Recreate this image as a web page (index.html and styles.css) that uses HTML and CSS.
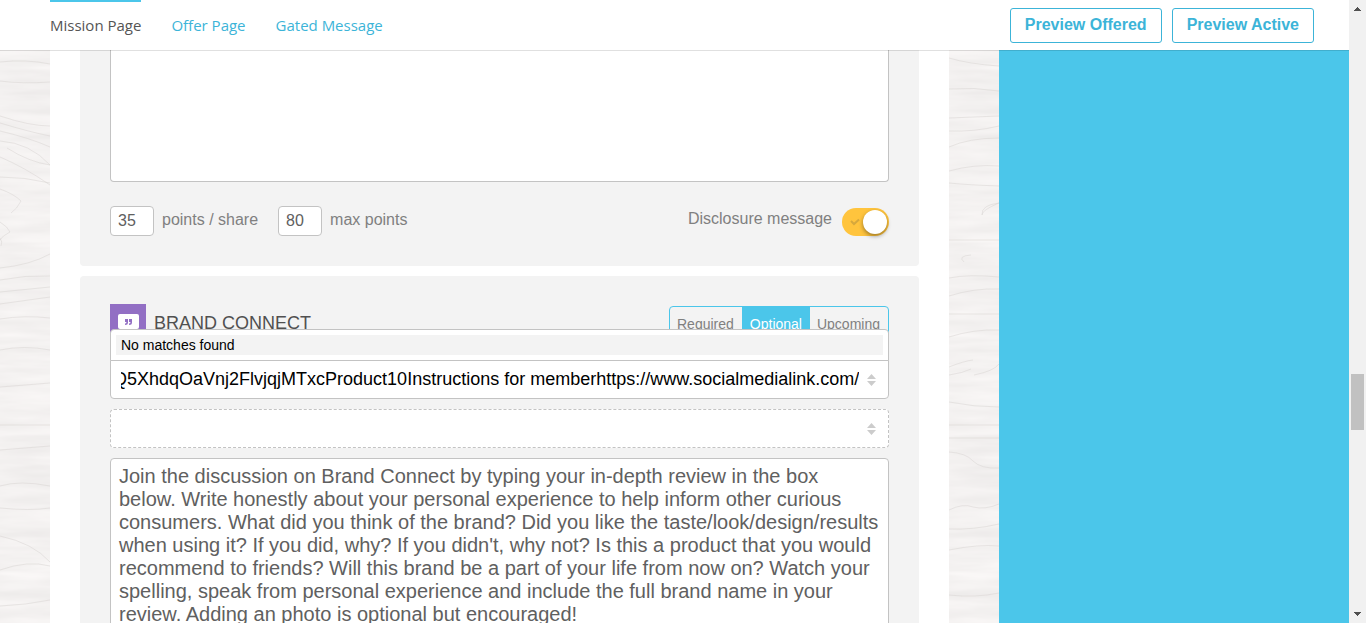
FILE: index.html
```
<!DOCTYPE html>
<html lang="en">
<head>
<meta charset="utf-8">
<title>Mission Page</title>
<link rel="stylesheet" href="styles.css">
</head>
<body>
<div class="app">
  <div class="main">
    <header class="topbar">
      <nav class="tabs">
        <a class="tab tab-active" href="#mission">Mission Page</a>
        <a class="tab" href="#offer">Offer Page</a>
        <a class="tab" href="#gated">Gated Message</a>
      </nav>
      <div class="actions">
        <button class="preview" type="button">Preview Offered</button>
        <button class="preview" type="button">Preview Active</button>
      </div>
    </header>
    <div class="workspace">
      <svg class="wood" viewBox="0 0 50 573" preserveAspectRatio="xMinYMin slice" aria-hidden="true">
        <defs>
          <filter id="grain" x="0" y="0" width="100%" height="100%" color-interpolation-filters="sRGB">
            <feTurbulence type="fractalNoise" baseFrequency="0.012 0.1" numOctaves="3" seed="4"/>
            <feColorMatrix values="0.07 0 0 0 0.92  0.07 0 0 0 0.911  0.07 0 0 0 0.908  0 0 0 0 1"/>
          </filter>
        </defs>
        <rect width="50" height="573" filter="url(#grain)"/>
        <g class="veins">
          <path d="M0 12q26-3 50 2M0 31q22 3 50 1M0 66q30 10 50 10M0 73q30 9 50 13M0 81q30 7 50 16M0 91q30 2 50 24M7 98q22 14 43 17M0 107q24 10 50 28M0 127q25 0 50 6"/>
          <path d="M0 139q14 5 21 12q-4 8-10 12M0 172q8 5 10 10q-8 4-10 8M0 188q3 4 1 8M0 218q30-3 50-14M0 230q25-5 50-4M0 242l50-5M0 254l50-7"/>
          <path d="M0 269q25-4 50-1M0 300q24-5 50 0M0 337l50-4M0 375h50M0 400l50-4M0 436q20-6 50 0M0 458q30 3 50 0M0 486q33 7 50 26M0 520q28-10 50-4M0 556q26-1 50-6"/>
        </g>
      </svg>
      <main class="page">
        <section class="card card-share">
          <textarea class="message message-share" aria-label="Share message"></textarea>
          <div class="points">
            <input class="number" id="share" type="text" value="35">
            <label class="points-label" for="share">points / share</label>
            <input class="number" id="max" type="text" value="80">
            <label class="points-label" for="max">max points</label>
            <label class="disclosure">
              <span class="disclosure-text">Disclosure message</span>
              <input class="switch-input" type="checkbox" checked>
              <span class="switch">
                <svg class="tick" viewBox="0 0 10 8" aria-hidden="true"><path d="M1 3L4 6L9 1.500"/></svg>
                <span class="knob"></span>
              </span>
            </label>
          </div>
        </section>
        <section class="card card-brand">
          <div class="brand-head">
            <svg class="brand-icon" viewBox="0 0 36 36" aria-hidden="true">
              <path fill="#926fc4" d="M0 0h36v36H0z"/>
              <path fill="#fff" d="M10 10h17q2 0 2 2v11q0 2-2 2H10q-2 0-2-2V12q0-2 2-2z"/>
              <path fill="#926fc4" d="M15 15h3v3.500q0 2.500-3 2.500v-1.500q1.500 0 1.500-1.500H15zM19 15h3v3.500q0 2.500-3 2.500v-1.500q1.500 0 1.500-1.500H19z"/>
            </svg>
            <h2 class="brand-title">BRAND CONNECT</h2>
            <div class="segments" role="radiogroup" aria-label="Status">
              <label class="segment"><input class="segment-input" type="radio" name="status">Required</label>
              <label class="segment segment-on"><input class="segment-input" type="radio" name="status" checked>Optional</label>
              <label class="segment"><input class="segment-input" type="radio" name="status">Upcoming</label>
            </div>
          </div>
          <div class="combo">
            <div class="matches"><div class="match">No matches found</div></div>
            <input class="combo-input" type="text" aria-label="Search topic" value="Q5XhdqOaVnj2FlvjqjMTxcProduct10Instructions for memberhttps://www.socialmedialink.com/">
            <svg class="arrows" viewBox="0 0 9 12" aria-hidden="true"><path d="M0 5L4.500 0L9 5zM0 7h9L4.500 12z"/></svg>
          </div>
          <div class="combo combo-empty">
            <input class="combo-input" type="text" aria-label="Second topic">
            <svg class="arrows" viewBox="0 0 9 12" aria-hidden="true"><path d="M0 5L4.500 0L9 5zM0 7h9L4.500 12z"/></svg>
          </div>
          <textarea class="message message-brand" aria-label="Instructions" rows="9">Join the discussion on Brand Connect by typing your in-depth review in the box below. Write honestly about your personal experience to help inform other curious consumers. What did you think of the brand? Did you like the taste/look/design/results when using it? If you did, why? If you didn't, why not? Is this a product that you would recommend to friends? Will this brand be a part of your life from now on? Watch your spelling, speak from personal experience and include the full brand name in your review. Adding an photo is optional but encouraged!</textarea>
        </section>
      </main>
      <svg class="wood" viewBox="0 0 50 573" preserveAspectRatio="xMinYMin slice" aria-hidden="true">
        <rect width="50" height="573" filter="url(#grain)"/>
        <g class="veins">
          <path d="M0 8q20 6 50 8M0 39q25-2 50 2M0 68l50-2M0 81q25 1 50-5M0 97q20-9 50-9M0 121q25-7 50-5M0 133q20 2 50 3M50 153q-18 2-17 12q0-5 17-12M0 190h50M22 205q-14 1-7 7M0 228q20-4 50-1"/>
          <path d="M0 246q25-8 50-7M0 264h50M0 287q25-8 50-7M0 317q15-6 24-7M0 325q14-2 22-6M25 325q20-4 25-11M0 352q25 5 50 5M0 375h50M0 388h50"/>
          <path d="M0 402q17 1 24 9q8 8 26 7M0 460q14-7 24-3q12 3 26-3M0 479q24 1 50-5M0 500q30-6 50-4M0 545q26 3 50-2"/>
        </g>
      </svg>
      <aside class="sidebar"></aside>
    </div>
  </div>
  <div class="scrollbar" aria-hidden="true">
    <svg class="scroll-arrow" viewBox="0 0 17 17"><path d="M5 11h7v-1h-1v-1h-1V8H9V7H8v1H7v1H6v1H5z"/></svg>
    <div class="track-before"></div>
    <div class="thumb"></div>
    <div class="track-after"></div>
    <svg class="scroll-arrow" viewBox="0 0 17 17"><path d="M5 6h7v1h-1v1h-1v1H9v1H8V9H7V8H6V7H5z"/></svg>
  </div>
</div>
<script src="script.js"></script>
</body>
</html>
```
FILE: styles.css
```
* {
  box-sizing: border-box;
}

body {
  margin: 0;
  color: #808080;
  background: #fff;
  font: 16px/20px "Liberation Sans", Arial, sans-serif;
}

input,
textarea,
button {
  margin: 0;
  font-family: inherit;
  outline: 0;
}

.app {
  display: flex;
  height: 100vh;
  overflow: hidden;
}

.main {
  display: flex;
  flex: 1;
  flex-direction: column;
  min-width: 0;
}

/* Top bar */
.topbar {
  z-index: 1;
  display: flex;
  flex: none;
  justify-content: space-between;
  height: 50px;
  padding: 0 35px 0 50px;
  background: #fff;
  box-shadow: 0 1px 0 rgba(0, 0, 0, 0.12);
}

.tabs {
  display: flex;
  gap: 30px;
}

.tab {
  border-top: 2px solid transparent;
  color: #3cb4d8;
  font: 15px/47px "Open Sans", sans-serif;
  text-decoration: none;
}

.tab-active {
  border-color: #4bc6ea;
  color: #555;
}

.actions {
  display: flex;
  gap: 10px;
  align-items: flex-start;
  padding-top: 8px;
}

.preview {
  height: 35px;
  padding: 0 14px 2px;
  border: 1px solid #3cb4d8;
  border-radius: 3px;
  color: #3cb4d8;
  background: #fff;
  font-size: 16px;
  font-weight: bold;
}

/* Workspace */
.workspace {
  display: grid;
  flex: 1;
  grid-template-columns: 50px 1fr 50px 350px;
  min-height: 0;
}

.wood {
  width: 50px;
  height: 100%;
  background: #f2f0ef;
}

.veins {
  fill: none;
  stroke: #d8d4d2;
  stroke-opacity: 0.5;
}

.sidebar {
  background: #4bc6ea;
}

.page {
  display: flex;
  flex-direction: column;
  gap: 10px;
  min-width: 0;
  padding: 0 30px;
  overflow: hidden;
  background: #fff;
}

.card {
  flex: none;
  padding: 0 30px 30px;
  border-radius: 4px;
  background: #f3f3f3;
}

.card-share {
  border-radius: 0 0 4px 4px;
}

.card-brand {
  padding-top: 28px;
}

.message {
  display: block;
  width: 100%;
  padding: 6px 8px;
  border: 1px solid #c3c3c3;
  border-radius: 4px;
  color: #606060;
  background: #fff;
  font-size: 20px;
  line-height: 23px;
  overflow: hidden;
  resize: none;
}

.message-share {
  height: 132px;
  border-top: 0;
  border-radius: 0 0 4px 4px;
}

/* Points row */
.points {
  display: flex;
  align-items: flex-start;
  margin-top: 24px;
}

.number {
  width: 44px;
  height: 30px;
  padding: 0 7px 1px;
  border: 1px solid #c3c3c3;
  border-radius: 4px;
  color: #606060;
  background: #fff;
  font-size: 16px;
}

.points-label {
  margin: 4px 20px 0 8px;
}

.disclosure {
  display: flex;
  gap: 10px;
  margin-left: auto;
}

.disclosure-text {
  padding-top: 3px;
}

.switch-input,
.segment-input {
  position: absolute;
  opacity: 0;
  pointer-events: none;
}

.switch {
  display: flex;
  align-items: center;
  justify-content: space-between;
  width: 47px;
  height: 28px;
  margin-top: 2px;
  padding: 0 2px 0 8px;
  border-radius: 14px;
  background: #ffc43d;
}

.tick {
  width: 10px;
  height: 8px;
  fill: none;
  stroke: #d6a83c;
  stroke-width: 2;
}

.knob {
  width: 24px;
  height: 24px;
  border-radius: 50%;
  background: #fff;
  box-shadow: 0 2px 4px rgba(0, 0, 0, 0.4);
}

/* Brand connect */
.brand-head {
  display: flex;
  align-items: flex-start;
  margin-bottom: 18px;
}

.brand-icon {
  width: 36px;
  height: 36px;
}

.brand-title {
  margin: 0 auto 0 8px;
  color: #505050;
  font-size: 18px;
  font-weight: normal;
  line-height: 38px;
}

.segments {
  display: flex;
  height: 36px;
  margin-top: 2px;
  border: 1px solid #4bc6ea;
  border-radius: 4px;
  font-size: 14px;
  line-height: 34px;
}

.segment {
  padding: 0 8px 0 7px;
}

.segment-on {
  padding: 0 8px;
  color: #fff;
  background: #4bc6ea;
}

.combo {
  position: relative;
  display: flex;
  align-items: center;
  height: 39px;
  margin-bottom: 10px;
  padding: 0 12px 0 10px;
  border: 1px solid #c3c3c3;
  border-radius: 0 0 4px 4px;
  background: #fff;
}

.combo-empty {
  border-style: dashed;
  border-radius: 4px;
}

.combo-input {
  flex: 1;
  min-width: 0;
  height: 37px;
  padding: 0;
  border: 0;
  color: #000;
  background: transparent;
  font-size: 18px;
}

.arrows {
  width: 9px;
  height: 12px;
  margin-left: 8px;
  fill: #ccc;
}

.matches {
  position: absolute;
  right: -1px;
  bottom: 100%;
  left: -1px;
  padding: 5px;
  border: 1px solid #c3c3c3;
  border-radius: 4px 4px 0 0;
  background: #fff;
}

.match {
  padding: 0 5px;
  color: #000;
  background: #f3f3f3;
  font-size: 14px;
  line-height: 20px;
}

/* Window scroll bar */
.scrollbar {
  display: flex;
  flex: none;
  flex-direction: column;
  width: 17px;
  background: #f1f1f1;
}

.scroll-arrow {
  width: 17px;
  height: 17px;
  fill: #505050;
}

.track-before {
  flex: 357;
}

.thumb {
  height: 56px;
  margin: 0 2px;
  background: #c1c1c1;
}

.track-after {
  flex: 176;
}
```
FILE: script.js
```
// Keep the end of a long search value in view.
document.querySelectorAll(".combo-input").forEach(function (input) {
  input.scrollLeft = input.scrollWidth;
});
```
